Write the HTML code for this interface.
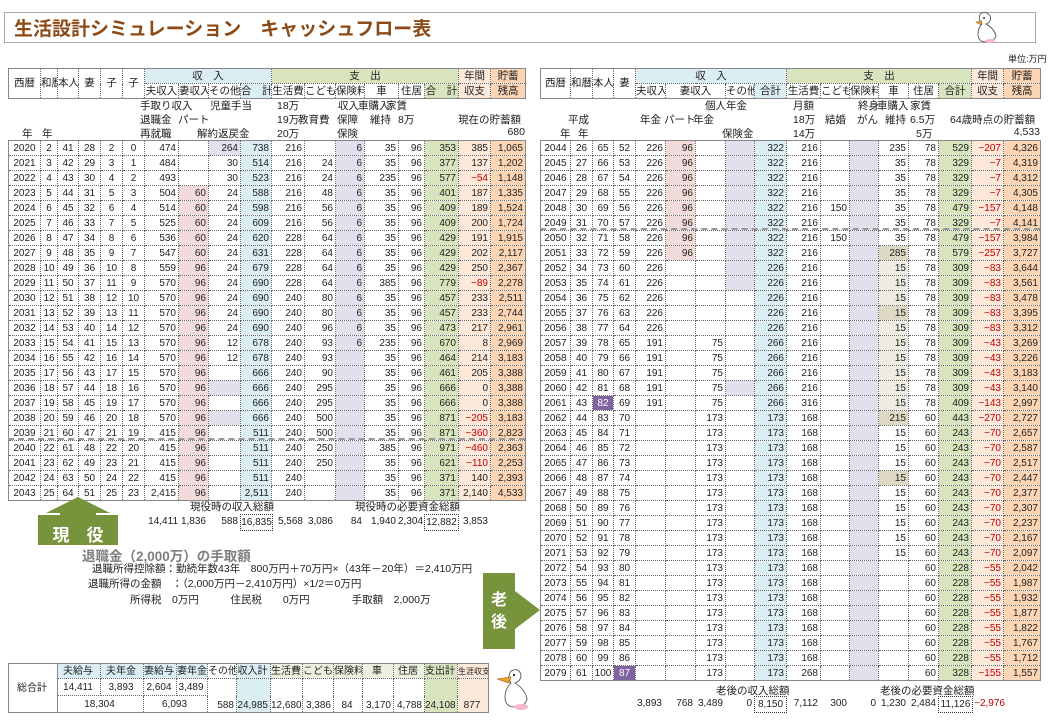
<!DOCTYPE html>
<html><head><meta charset="utf-8">
<style>
body{margin:0;width:1058px;height:721px;position:relative;background:#fff;font-family:"Liberation Sans","Noto Sans CJK JP",sans-serif;color:#222;overflow:hidden}
.a{position:absolute;white-space:nowrap}
table{border-collapse:collapse;table-layout:fixed;position:absolute;font-size:10px}
td{border:1px dotted #666;padding:0 2px 0 0;text-align:right;height:14px;line-height:13px;white-space:nowrap;overflow:hidden}
table.dt{border:1px solid #888}
table.hd td{text-align:center;padding:0;font-size:10.5px}
table.hd{border:1px solid #888}
.c1 td:nth-child(-n+6){text-align:center;padding:0}
.c2 td:nth-child(-n+4){text-align:center;padding:0}
.p{background:#f2dcdb}.l{background:#e4dfec}.b{background:#daeef3}.g{background:#d7e4bd}
.o{background:#fde9d9}.r{background:#fcd5b4}.t{background:#eeece1}.T{background:#ddd9c4}
.u{background:#8064a2;color:#fff}.w{background:#fff}
.n{color:#c00000}
.hb{background:#daeef3}.hg{background:#d7e4bd}.ho{background:#fde9d9}.hr{background:#fcd5b4}.hl{background:#ebf1de}
.nt{font-size:10.5px}
.bx{border:1px dotted #333;text-align:center}
</style></head><body>

<div class="a" style="left:4px;top:12px;width:1030px;height:29px;border:1px solid #aaa"></div>
<div class="a" style="left:14px;top:14px;font-size:19px;font-weight:bold;color:#8b4a16;letter-spacing:0px">生活設計シミュレーション　キャッシュフロー表</div>
<svg class="a" style="left:966px;top:10px" width="40" height="34" viewBox="0 0 40 34"><path d="M14 4 Q20 0 24 6 Q26 12 20 14 Q28 18 30 26 Q28 32 20 32 Q12 32 12 24 Q12 18 16 14 Q12 10 14 4Z" fill="#fff" stroke="#666" stroke-width="1"/><path d="M10 12 L16 11 L15 15Z" fill="#f0a030" stroke="#a06020" stroke-width=".6"/><ellipse cx="24" cy="31" rx="5" ry="2" fill="#f4b8c8"/><circle cx="18" cy="8" r="1" fill="#333"/></svg>
<div class="a" style="left:1008px;top:52px;font-size:9px">単位:万円</div>

<!-- LEFT HEADER -->
<table class="hd" style="left:8px;top:68px;width:517px">
<colgroup><col style="width:32px"><col style="width:17px"><col style="width:21px"><col style="width:22px"><col style="width:22px"><col style="width:22px"><col style="width:34px"><col style="width:30px"><col style="width:32px"><col style="width:31px"><col style="width:33px"><col style="width:31px"><col style="width:29px"><col style="width:34px"><col style="width:26px"><col style="width:34px"><col style="width:32px"><col style="width:35px"></colgroup>
<tr><td rowspan="2">西暦</td><td rowspan="2">和暦</td><td rowspan="2">本人</td><td rowspan="2">妻</td><td rowspan="2">子</td><td rowspan="2">子</td><td colspan="4" class="hb">収　入</td><td colspan="6" class="hg">支　出</td><td class="ho">年間</td><td class="hr">貯蓄</td></tr>
<tr><td>夫収入</td><td>妻収入</td><td>その他</td><td class="hb">合　計</td><td>生活費</td><td>こども</td><td>保険料</td><td>車</td><td>住居</td><td class="hg">合　計</td><td class="ho">収支</td><td class="hr">残高</td></tr>
</table>

<!-- left notes -->
<div class="a nt" style="left:140px;top:98px">手取り収入</div><div class="a nt" style="left:210px;top:98px">児童手当</div><div class="a nt" style="left:277px;top:98px">18万</div><div class="a nt" style="left:338px;top:98px">収入</div><div class="a nt" style="left:358px;top:98px">車購入</div><div class="a nt" style="left:386px;top:98px">家賃</div>
<div class="a nt" style="left:140px;top:112px">退職金</div><div class="a nt" style="left:178px;top:112px">パート</div><div class="a nt" style="left:277px;top:112px">19万</div><div class="a nt" style="left:298px;top:112px">教育費</div><div class="a nt" style="left:337px;top:112px">保障</div><div class="a nt" style="left:370px;top:112px">維持</div><div class="a nt" style="left:398px;top:112px">8万</div><div class="a nt" style="left:458px;top:112px">現在の貯蓄額</div>
<div class="a nt" style="left:22px;top:126px">年</div><div class="a nt" style="left:42px;top:126px">年</div><div class="a nt" style="left:140px;top:126px">再就職</div><div class="a nt" style="left:197px;top:126px">解約返戻金</div><div class="a nt" style="left:277px;top:126px">20万</div><div class="a nt" style="left:337px;top:126px">保険</div><div class="a nt" style="left:500px;top:126px;width:25px;text-align:right">680</div>

<!-- LEFT DATA -->
<table class="dt c1" style="left:8px;top:140px;width:517px">
<colgroup><col style="width:32px"><col style="width:17px"><col style="width:21px"><col style="width:22px"><col style="width:22px"><col style="width:22px"><col style="width:34px"><col class="p" style="width:30px"><col style="width:32px"><col class="b" style="width:31px"><col style="width:33px"><col style="width:31px"><col class="l" style="width:29px"><col style="width:34px"><col style="width:26px"><col class="g" style="width:34px"><col class="o" style="width:32px"><col class="r" style="width:35px"></colgroup>
<tr><td>2020<td>2<td>41<td>28<td>2<td>0<td>474<td class="w"><td class="l">264<td>738<td>216<td><td>6<td>35<td>96<td>353<td>385<td>1,065</tr>
<tr><td>2021<td>3<td>42<td>29<td>3<td>1<td>484<td class="w"><td>30<td>514<td>216<td>24<td>6<td>35<td>96<td>377<td>137<td>1,202</tr>
<tr><td>2022<td>4<td>43<td>30<td>4<td>2<td>493<td class="w"><td>30<td>523<td>216<td>24<td>6<td>235<td>96<td>577<td class="n">−54<td>1,148</tr>
<tr><td>2023<td>5<td>44<td>31<td>5<td>3<td>504<td>60<td>24<td>588<td>216<td>48<td>6<td>35<td>96<td>401<td>187<td>1,335</tr>
<tr><td>2024<td>6<td>45<td>32<td>6<td>4<td>514<td>60<td>24<td>598<td>216<td>56<td>6<td>35<td>96<td>409<td>189<td>1,524</tr>
<tr><td>2025<td>7<td>46<td>33<td>7<td>5<td>525<td>60<td>24<td>609<td>216<td>56<td>6<td>35<td>96<td>409<td>200<td>1,724</tr>
<tr><td>2026<td>8<td>47<td>34<td>8<td>6<td>536<td>60<td>24<td>620<td>228<td>64<td>6<td>35<td>96<td>429<td>191<td>1,915</tr>
<tr><td>2027<td>9<td>48<td>35<td>9<td>7<td>547<td>60<td>24<td>631<td>228<td>64<td>6<td>35<td>96<td>429<td>202<td>2,117</tr>
<tr><td>2028<td>10<td>49<td>36<td>10<td>8<td>559<td>96<td>24<td>679<td>228<td>64<td>6<td>35<td>96<td>429<td>250<td>2,367</tr>
<tr><td>2029<td>11<td>50<td>37<td>11<td>9<td>570<td>96<td>24<td>690<td>228<td>64<td>6<td>385<td>96<td>779<td class="n">−89<td>2,278</tr>
<tr><td>2030<td>12<td>51<td>38<td>12<td>10<td>570<td>96<td>24<td>690<td>240<td>80<td>6<td>35<td>96<td>457<td>233<td>2,511</tr>
<tr><td>2031<td>13<td>52<td>39<td>13<td>11<td>570<td>96<td>24<td>690<td>240<td>80<td>6<td>35<td>96<td>457<td>233<td>2,744</tr>
<tr><td>2032<td>14<td>53<td>40<td>14<td>12<td>570<td>96<td>24<td>690<td>240<td>96<td>6<td>35<td>96<td>473<td>217<td>2,961</tr>
<tr><td>2033<td>15<td>54<td>41<td>15<td>13<td>570<td>96<td>12<td>678<td>240<td>93<td>6<td>235<td>96<td>670<td>8<td>2,969</tr>
<tr><td>2034<td>16<td>55<td>42<td>16<td>14<td>570<td>96<td>12<td>678<td>240<td>93<td><td>35<td>96<td>464<td>214<td>3,183</tr>
<tr><td>2035<td>17<td>56<td>43<td>17<td>15<td>570<td>96<td><td>666<td>240<td>90<td><td>35<td>96<td>461<td>205<td>3,388</tr>
<tr><td>2036<td>18<td>57<td>44<td>18<td>16<td>570<td>96<td class="l"><td>666<td>240<td>295<td><td>35<td>96<td>666<td>0<td>3,388</tr>
<tr><td>2037<td>19<td>58<td>45<td>19<td>17<td>570<td>96<td><td>666<td>240<td>295<td><td>35<td>96<td>666<td>0<td>3,388</tr>
<tr><td>2038<td>20<td>59<td>46<td>20<td>18<td>570<td>96<td class="l"><td>666<td>240<td>500<td><td>35<td>96<td>871<td class="n">−205<td>3,183</tr>
<tr><td>2039<td>21<td>60<td>47<td>21<td>19<td>415<td>96<td><td>511<td>240<td>500<td><td>35<td>96<td>871<td class="n">−360<td>2,823</tr>
<tr><td>2040<td>22<td>61<td>48<td>22<td>20<td>415<td>96<td><td>511<td>240<td>250<td><td>385<td>96<td>971<td class="n">−460<td>2,363</tr>
<tr><td>2041<td>23<td>62<td>49<td>23<td>21<td>415<td>96<td><td>511<td>240<td>250<td><td>35<td>96<td>621<td class="n">−110<td>2,253</tr>
<tr><td>2042<td>24<td>63<td>50<td>24<td>22<td>415<td>96<td><td>511<td>240<td><td><td>35<td>96<td>371<td>140<td>2,393</tr>
<tr><td>2043<td>25<td>64<td>51<td>25<td>23<td>2,415<td>96<td><td>2,511<td>240<td><td><td>35<td>96<td>371<td>2,140<td>4,533</tr>
</table>
<div class="a" style="left:8px;top:438px;width:517px;border-top:2px dashed #999"></div>

<!-- RIGHT HEADER -->
<table class="hd" style="left:540px;top:68px;width:500px">
<colgroup><col style="width:30px"><col style="width:22px"><col style="width:21px"><col style="width:22px"><col style="width:30px"><col style="width:30px"><col style="width:30px"><col style="width:29px"><col style="width:32px"><col style="width:34px"><col style="width:29px"><col style="width:29px"><col style="width:30px"><col style="width:30px"><col style="width:33px"><col style="width:32px"><col style="width:37px"></colgroup>
<tr><td rowspan="2">西暦</td><td rowspan="2">和暦</td><td rowspan="2">本人</td><td rowspan="2">妻</td><td colspan="5" class="hb">収　入</td><td colspan="6" class="hg">支　出</td><td class="ho">年間</td><td class="hr">貯蓄</td></tr>
<tr><td>夫収入</td><td colspan="2">妻収入</td><td>その他</td><td class="hb">合計</td><td>生活費</td><td>こども</td><td>保険料</td><td>車</td><td>住居</td><td class="hg">合計</td><td class="ho">収支</td><td class="hr">残高</td></tr>
</table>

<!-- right notes -->
<div class="a nt" style="left:705px;top:98px">個人年金</div><div class="a nt" style="left:793px;top:98px">月額</div><div class="a nt" style="left:858px;top:98px">終身</div><div class="a nt" style="left:877px;top:98px">車購入</div><div class="a nt" style="left:910px;top:98px">家賃</div>
<div class="a nt" style="left:568px;top:112px">平成</div><div class="a nt" style="left:640px;top:112px">年金</div><div class="a nt" style="left:664px;top:112px">パート</div><div class="a nt" style="left:693px;top:112px">年金</div><div class="a nt" style="left:793px;top:112px">18万</div><div class="a nt" style="left:825px;top:112px">結婚</div><div class="a nt" style="left:857px;top:112px">がん</div><div class="a nt" style="left:885px;top:112px">維持</div><div class="a nt" style="left:910px;top:112px">6.5万</div><div class="a nt" style="left:950px;top:112px">64歳時点の貯蓄額</div>
<div class="a nt" style="left:560px;top:126px">年</div><div class="a nt" style="left:578px;top:126px">年</div><div class="a nt" style="left:722px;top:126px">保険金</div><div class="a nt" style="left:793px;top:126px">14万</div><div class="a nt" style="left:916px;top:126px">5万</div><div class="a nt" style="left:1000px;top:126px;width:40px;text-align:right">4,533</div>

<!-- RIGHT DATA -->
<table class="dt c2" style="left:540px;top:140px;width:500px">
<colgroup><col style="width:30px"><col style="width:22px"><col style="width:21px"><col style="width:22px"><col style="width:30px"><col style="width:30px"><col style="width:30px"><col style="width:29px"><col class="b" style="width:32px"><col style="width:34px"><col style="width:29px"><col class="l" style="width:29px"><col style="width:30px"><col style="width:30px"><col class="g" style="width:33px"><col class="o" style="width:32px"><col class="r" style="width:37px"></colgroup>
<tr><td>2044<td>26<td>65<td>52<td>226<td class="p">96<td><td class="l"><td>322<td>216<td><td><td>235<td>78<td>529<td class="n">−207<td>4,326</tr>
<tr><td>2045<td>27<td>66<td>53<td>226<td class="p">96<td><td class="l"><td>322<td>216<td><td><td>35<td>78<td>329<td class="n">−7<td>4,319</tr>
<tr><td>2046<td>28<td>67<td>54<td>226<td class="p">96<td><td class="l"><td>322<td>216<td><td><td>35<td>78<td>329<td class="n">−7<td>4,312</tr>
<tr><td>2047<td>29<td>68<td>55<td>226<td class="p">96<td><td class="l"><td>322<td>216<td><td><td>35<td>78<td>329<td class="n">−7<td>4,305</tr>
<tr><td>2048<td>30<td>69<td>56<td>226<td class="p">96<td><td class="l"><td>322<td>216<td>150<td><td>35<td>78<td>479<td class="n">−157<td>4,148</tr>
<tr><td>2049<td>31<td>70<td>57<td>226<td class="p">96<td><td class="l"><td>322<td>216<td><td><td>35<td>78<td>329<td class="n">−7<td>4,141</tr>
<tr><td>2050<td>32<td>71<td>58<td>226<td class="p">96<td><td class="l"><td>322<td>216<td>150<td><td>35<td>78<td>479<td class="n">−157<td>3,984</tr>
<tr><td>2051<td>33<td>72<td>59<td>226<td class="p">96<td><td class="l"><td>322<td>216<td><td><td class="T">285<td>78<td>579<td class="n">−257<td>3,727</tr>
<tr><td>2052<td>34<td>73<td>60<td>226<td><td><td class="l"><td>226<td>216<td><td><td class="t">15<td>78<td>309<td class="n">−83<td>3,644</tr>
<tr><td>2053<td>35<td>74<td>61<td>226<td><td><td class="l"><td>226<td>216<td><td><td class="t">15<td>78<td>309<td class="n">−83<td>3,561</tr>
<tr><td>2054<td>36<td>75<td>62<td>226<td><td><td><td>226<td>216<td><td><td class="t">15<td>78<td>309<td class="n">−83<td>3,478</tr>
<tr><td>2055<td>37<td>76<td>63<td>226<td><td><td><td>226<td>216<td><td><td class="T">15<td>78<td>309<td class="n">−83<td>3,395</tr>
<tr><td>2056<td>38<td>77<td>64<td>226<td><td><td><td>226<td>216<td><td><td class="t">15<td>78<td>309<td class="n">−83<td>3,312</tr>
<tr><td>2057<td>39<td>78<td>65<td>191<td><td>75<td><td>266<td>216<td><td><td class="t">15<td>78<td>309<td class="n">−43<td>3,269</tr>
<tr><td>2058<td>40<td>79<td>66<td>191<td><td>75<td><td>266<td>216<td><td><td class="t">15<td>78<td>309<td class="n">−43<td>3,226</tr>
<tr><td>2059<td>41<td>80<td>67<td>191<td><td>75<td><td>266<td>216<td><td><td class="t">15<td>78<td>309<td class="n">−43<td>3,183</tr>
<tr><td>2060<td>42<td>81<td>68<td>191<td><td>75<td class="l"><td>266<td>216<td><td><td class="t">15<td>78<td>309<td class="n">−43<td>3,140</tr>
<tr><td>2061<td>43<td class="u">82<td>69<td>191<td><td>75<td><td>266<td>316<td><td><td class="t">15<td>78<td>409<td class="n">−143<td>2,997</tr>
<tr><td>2062<td>44<td>83<td>70<td><td><td>173<td><td>173<td>168<td><td><td class="T">215<td>60<td>443<td class="n">−270<td>2,727</tr>
<tr><td>2063<td>45<td>84<td>71<td><td><td>173<td><td>173<td>168<td><td><td>15<td>60<td>243<td class="n">−70<td>2,657</tr>
<tr><td>2064<td>46<td>85<td>72<td><td><td>173<td><td>173<td>168<td><td><td>15<td>60<td>243<td class="n">−70<td>2,587</tr>
<tr><td>2065<td>47<td>86<td>73<td><td><td>173<td><td>173<td>168<td><td><td>15<td>60<td>243<td class="n">−70<td>2,517</tr>
<tr><td>2066<td>48<td>87<td>74<td><td><td>173<td><td>173<td>168<td><td><td class="T">15<td>60<td>243<td class="n">−70<td>2,447</tr>
<tr><td>2067<td>49<td>88<td>75<td><td><td>173<td><td>173<td>168<td><td><td>15<td>60<td>243<td class="n">−70<td>2,377</tr>
<tr><td>2068<td>50<td>89<td>76<td><td><td>173<td><td>173<td>168<td><td><td>15<td>60<td>243<td class="n">−70<td>2,307</tr>
<tr><td>2069<td>51<td>90<td>77<td><td><td>173<td><td>173<td>168<td><td><td>15<td>60<td>243<td class="n">−70<td>2,237</tr>
<tr><td>2070<td>52<td>91<td>78<td><td><td>173<td><td>173<td>168<td><td><td>15<td>60<td>243<td class="n">−70<td>2,167</tr>
<tr><td>2071<td>53<td>92<td>79<td><td><td>173<td><td>173<td>168<td><td><td>15<td>60<td>243<td class="n">−70<td>2,097</tr>
<tr><td>2072<td>54<td>93<td>80<td><td><td>173<td><td>173<td>168<td><td><td><td>60<td>228<td class="n">−55<td>2,042</tr>
<tr><td>2073<td>55<td>94<td>81<td><td><td>173<td><td>173<td>168<td><td><td><td>60<td>228<td class="n">−55<td>1,987</tr>
<tr><td>2074<td>56<td>95<td>82<td><td><td>173<td><td>173<td>168<td><td><td><td>60<td>228<td class="n">−55<td>1,932</tr>
<tr><td>2075<td>57<td>96<td>83<td><td><td>173<td><td>173<td>168<td><td><td><td>60<td>228<td class="n">−55<td>1,877</tr>
<tr><td>2076<td>58<td>97<td>84<td><td><td>173<td><td>173<td>168<td><td><td><td>60<td>228<td class="n">−55<td>1,822</tr>
<tr><td>2077<td>59<td>98<td>85<td><td><td>173<td><td>173<td>168<td><td><td><td>60<td>228<td class="n">−55<td>1,767</tr>
<tr><td>2078<td>60<td>99<td>86<td><td><td>173<td><td>173<td>168<td><td><td><td>60<td>228<td class="n">−55<td>1,712</tr>
<tr><td>2079<td>61<td>100<td class="u">87<td><td><td>173<td><td>173<td>268<td><td><td><td>60<td>328<td class="n">−155<td>1,557</tr>
</table>
<div class="a" style="left:540px;top:228px;width:500px;border-top:2px dashed #999"></div>

<!-- left totals -->
<div class="a nt" style="left:190px;top:499px">現役時の収入総額</div>
<div class="a nt" style="left:355px;top:499px">現役時の必要資金総額</div>
<div class="a" style="top:516px;left:0;font-size:10px">
<span class="a" style="left:140px;width:38px;text-align:right">14,411</span>
<span class="a" style="left:176px;width:30px;text-align:right">1,836</span>
<span class="a" style="left:208px;width:30px;text-align:right">588</span>
<span class="a" style="left:240px;width:30px;top:-2px;height:15px;line-height:15px" ><span class="bx" style="display:block;width:31px">16,835</span></span>
<span class="a" style="left:271px;width:32px;text-align:right">5,568</span>
<span class="a" style="left:304px;width:29px;text-align:right">3,086</span>
<span class="a" style="left:335px;width:27px;text-align:right">84</span>
<span class="a" style="left:364px;width:32px;text-align:right">1,940</span>
<span class="a" style="left:398px;width:24px;text-align:right">2,304</span>
<span class="a" style="left:424px;top:-2px;height:15px;line-height:15px"><span class="bx" style="display:block;width:33px">12,882</span></span>
<span class="a" style="left:458px;width:30px;text-align:right">3,853</span>
</div>

<!-- 現役 arrow -->
<svg class="a" style="left:38px;top:497px" width="80" height="50" viewBox="0 0 80 50"><polygon points="40,0 72,16 58,16 58,18 80,18 80,48 0,48 0,18 22,18 22,16 8,16" fill="#77933c"/></svg>
<div class="a" style="left:38px;top:521px;width:80px;text-align:center;color:#fff;font-weight:bold;font-size:17px">現　役</div>

<div class="a" style="left:82px;top:545px;font-size:13.5px;font-weight:bold;color:#7f7f7f">退職金（2,000万）の手取額</div>
<div class="a" style="left:92px;top:561px;font-size:10.5px">退職所得控除額：勤続年数43年　800万円＋70万円×（43年－20年）＝2,410万円</div>
<div class="a" style="left:88px;top:576px;font-size:10.5px">退職所得の金額　：（2,000万円－2,410万円）×1/2＝0万円</div>
<div class="a" style="left:130px;top:592px;font-size:10.5px">所得税　0万円　　　住民税　　0万円　　　　手取額　2,000万</div>

<!-- 老後 -->
<svg class="a" style="left:483px;top:573px" width="60" height="77" viewBox="0 0 60 77"><rect x="0" y="0" width="32" height="76" fill="#77933c"/><polygon points="32,18 57,37 32,56" fill="#77933c"/></svg>
<div class="a" style="left:483px;top:590px;width:32px;text-align:center;color:#fff;font-weight:bold;font-size:16px;line-height:22px">老<br>後</div>

<!-- right totals -->
<div class="a nt" style="left:716px;top:683px">老後の収入総額</div>
<div class="a nt" style="left:880px;top:683px">老後の必要資金総額</div>
<div class="a" style="top:698px;left:0;font-size:10px">
<span class="a" style="left:630px;width:32px;text-align:right">3,893</span>
<span class="a" style="left:665px;width:28px;text-align:right">768</span>
<span class="a" style="left:695px;width:28px;text-align:right">3,489</span>
<span class="a" style="left:725px;width:27px;text-align:right">0</span>
<span class="a" style="left:754px;top:-2px;height:15px;line-height:15px"><span class="bx" style="display:block;width:31px">8,150</span></span>
<span class="a" style="left:786px;width:32px;text-align:right">7,112</span>
<span class="a" style="left:820px;width:27px;text-align:right">300</span>
<span class="a" style="left:849px;width:27px;text-align:right">0</span>
<span class="a" style="left:878px;width:28px;text-align:right">1,230</span>
<span class="a" style="left:908px;width:28px;text-align:right">2,484</span>
<span class="a" style="left:938px;top:-2px;height:15px;line-height:15px"><span class="bx" style="display:block;width:33px">11,126</span></span>
<span class="a n" style="left:971px;width:34px;text-align:right">−2,976</span>
</div>

<!-- summary table -->
<table style="left:8px;top:663px;width:480px;border:1px solid #888;font-size:10px">
<colgroup><col style="width:49px"><col style="width:43px"><col style="width:43px"><col style="width:33px"><col style="width:31px"><col style="width:29px"><col style="width:34px"><col style="width:32px"><col style="width:31px"><col style="width:29px"><col style="width:31px"><col style="width:31px"><col style="width:33px"><col style="width:31px"></colgroup>
<tr style="height:15px"><td rowspan="3" style="text-align:center;border:1px solid #888">総合計</td><td class="hb" style="text-align:center">夫給与</td><td class="hb" style="text-align:center">夫年金</td><td class="hb" style="text-align:center">妻給与</td><td class="hb" style="text-align:center">妻年金</td><td style="text-align:center">その他</td><td class="hb" style="text-align:center">収入計</td><td class="hl" style="text-align:center">生活費</td><td class="hl" style="text-align:center">こども</td><td class="hl" style="text-align:center">保険料</td><td class="hl" style="text-align:center">車</td><td class="hl" style="text-align:center">住居</td><td class="hg" style="text-align:center">支出計</td><td class="ho" style="text-align:center;font-size:8px">生涯収支</td></tr>
<tr style="height:17px"><td style="text-align:center">14,411</td><td style="text-align:center">3,893</td><td style="text-align:center">2,604</td><td style="text-align:center">3,489</td><td rowspan="2" style="vertical-align:bottom">588</td><td rowspan="2" class="hb" style="vertical-align:bottom">24,985</td><td rowspan="2" style="vertical-align:bottom">12,680</td><td rowspan="2" style="vertical-align:bottom">3,386</td><td rowspan="2" style="vertical-align:bottom;text-align:center">84</td><td rowspan="2" style="vertical-align:bottom">3,170</td><td rowspan="2" style="vertical-align:bottom">4,788</td><td rowspan="2" class="hg" style="vertical-align:bottom">24,108</td><td rowspan="2" class="ho" style="vertical-align:bottom;text-align:center">877</td></tr>
<tr style="height:17px"><td colspan="2" style="text-align:center">18,304</td><td colspan="2" style="text-align:center">6,093</td></tr>
</table>
<svg class="a" style="left:493px;top:665px" width="40" height="46" viewBox="0 0 40 46"><path d="M18 6 Q26 2 28 10 Q28 16 22 18 Q32 24 34 34 Q32 42 22 42 Q12 42 12 32 Q12 24 18 18 Q14 12 18 6Z" fill="#fff" stroke="#666" stroke-width="1"/><path d="M4 14 L18 12 L16 18Z" fill="#f0a030" stroke="#a06020" stroke-width=".6"/><ellipse cx="28" cy="42" rx="7" ry="3" fill="#f4b8c8"/><circle cx="21" cy="10" r="1.2" fill="#333"/></svg>

</body></html>
